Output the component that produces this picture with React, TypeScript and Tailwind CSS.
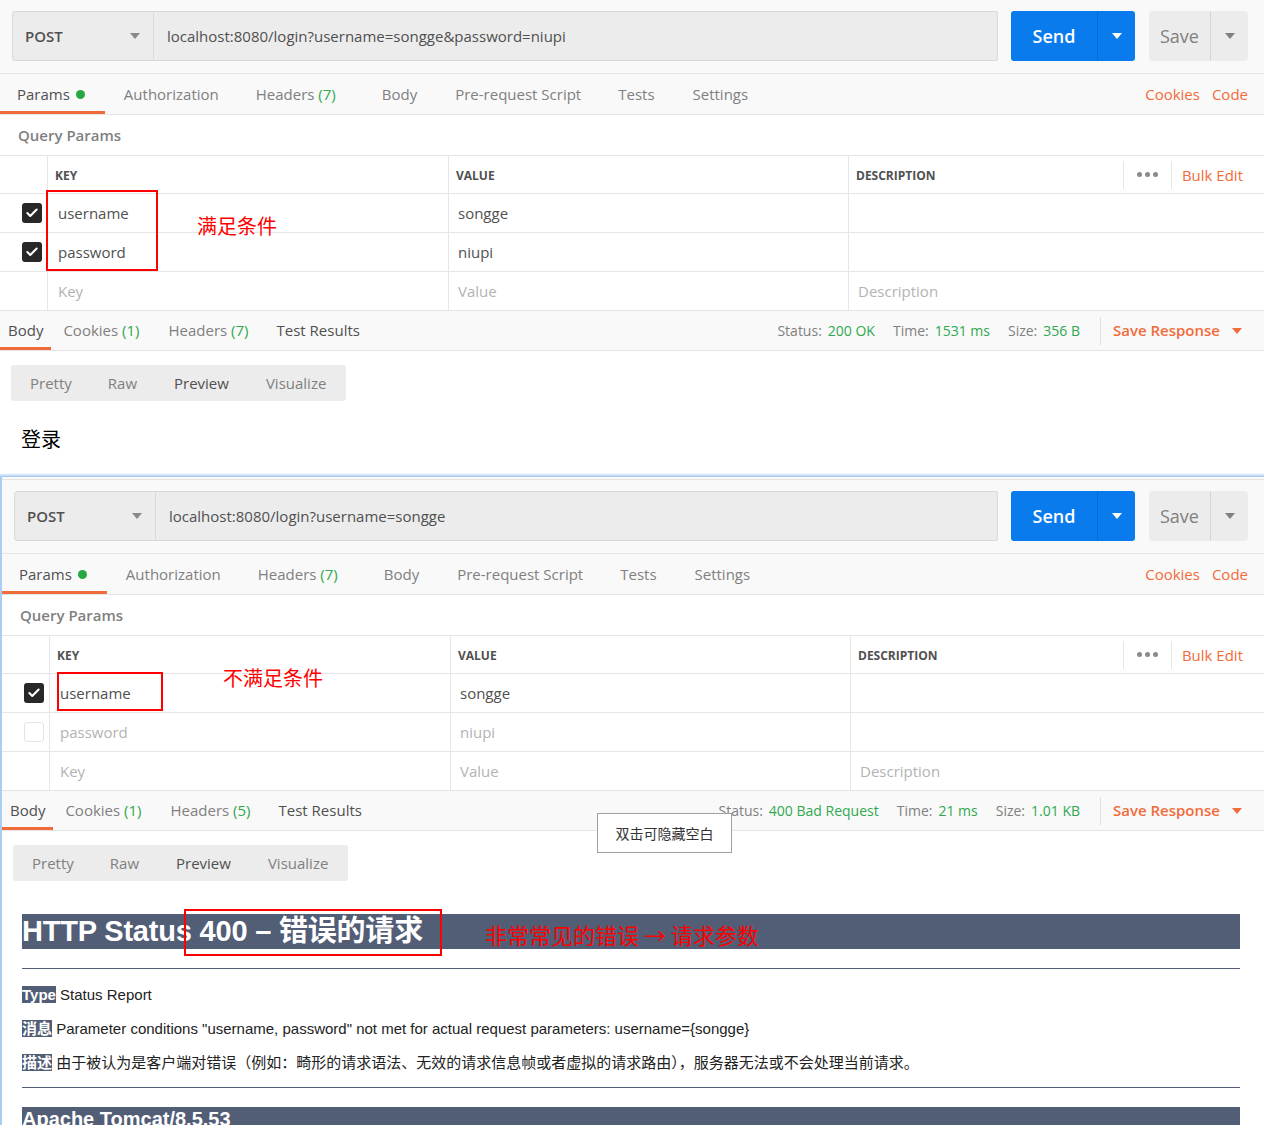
import React from 'react';
import { Check } from 'lucide-react';

const Caret = ({ className = '' }: { className?: string }) => (
  <svg width="10" height="6" viewBox="0 0 10 6" className={className}>
    <polygon points="0,0 10,0 5,6" fill="currentColor" />
  </svg>
);

type Row = { checked: boolean; key: string; value: string };

type PanelProps = {
  url: string;
  rows: Row[];
  respHeaders: number;
  status: string;
  time: string;
  size: string;
  children?: React.ReactNode;
};

function CheckBox({ checked }: { checked: boolean }) {
  if (checked) {
    return (
      <div className="w-[20px] h-[20px] rounded-[3px] bg-[#282828] flex items-center justify-center">
        <Check size={14} strokeWidth={3.5} className="text-white" />
      </div>
    );
  }
  return <div className="w-[20px] h-[20px] rounded-[3px] bg-white border border-[#e3e3e3]" />;
}

function Panel({ url, rows, respHeaders, status, time, size, children }: PanelProps) {
  return (
    <div className="bg-white">
      {/* URL bar */}
      <div className="h-[74px] bg-[#f9f9f9] border-b border-[#e4e4e4] flex pt-[11px] pl-[12px] pr-[16px]">
        <div className="flex h-[50px] flex-1">
          <div className="w-[142px] h-full bg-[#ececec] border border-[#d9d9d9] rounded-l-[3px] flex items-center justify-between pl-[12px] pr-[13px]">
            <span className="text-[15px] font-semibold text-[#505050]">POST</span>
            <Caret className="text-[#8a8a8a]" />
          </div>
          <div className="flex-1 h-full bg-[#ececec] border border-l-0 border-[#d9d9d9] rounded-r-[3px] flex items-center pl-[13px] text-[15px] text-[#505050]">
            {url}
          </div>
        </div>
        <div className="ml-[13px] flex h-[50px] w-[124px] rounded-[3px] bg-[#097bed]">
          <div className="w-[86px] flex items-center justify-center text-white text-[18px] font-semibold">Send</div>
          <div className="w-px bg-[#0a69cc]" />
          <div className="flex-1 flex items-center justify-center text-white">
            <Caret />
          </div>
        </div>
        <div className="ml-[14px] flex h-[50px] w-[99px] rounded-[3px] bg-[#ececec]">
          <div className="w-[61px] flex items-center justify-center text-[#808080] text-[18px]">Save</div>
          <div className="w-px bg-[#d6d6d6]" />
          <div className="flex-1 flex items-center justify-center text-[#808080]">
            <Caret />
          </div>
        </div>
      </div>

      {/* Request tabs */}
      <div className="h-[41px] bg-[#f9f9f9] border-b border-[#e4e4e4] flex justify-between text-[15px]">
        <div className="flex h-full">
          <div className="flex items-center pl-[17px] pr-[20px] border-b-[3px] border-[#f26b3a] pt-[3px] text-[#505050]">
            Params
            <span className="ml-[6px] w-[9px] h-[9px] rounded-full bg-[#28a745]" />
          </div>
          <div className="flex items-center pl-[19px] pr-[18px] text-[#808080]">Authorization</div>
          <div className="flex items-center px-[19px] text-[#808080]">
            Headers&nbsp;<span className="text-[#2fa84f]">(7)</span>
          </div>
          <div className="flex items-center pl-[27px] pr-[19px] text-[#808080]">Body</div>
          <div className="flex items-center pl-[19px] pr-[18px] text-[#808080]">Pre-request Script</div>
          <div className="flex items-center px-[19px] text-[#808080]">Tests</div>
          <div className="flex items-center px-[19px] text-[#808080]">Settings</div>
        </div>
        <div className="flex items-center gap-[12px] pr-[16px] text-[#f26b3a]">
          <span>Cookies</span>
          <span>Code</span>
        </div>
      </div>

      {/* Query params */}
      <div className="h-[41px] bg-white border-b border-[#e6e6e6] flex items-center pl-[18px] text-[15px] font-semibold text-[#808080]">
        Query Params
      </div>

      {/* Table */}
      <div className="grid grid-cols-[47px_401px_400px_1fr] text-[15px]">
        <div className="h-[38px] border-b border-[#e6e6e6]" />
        <div className="h-[38px] border-b border-l border-[#e6e6e6] flex items-center pl-[7px] pt-[2px] text-[12px] font-bold text-[#505050]">KEY</div>
        <div className="h-[38px] border-b border-l border-[#e6e6e6] flex items-center pl-[7px] pt-[2px] text-[12px] font-bold text-[#505050]">VALUE</div>
        <div className="h-[38px] border-b border-l border-[#e6e6e6] flex items-center pl-[7px] text-[12px] font-bold text-[#505050]">
          <span className="flex-1 pt-[2px]">DESCRIPTION</span>
          <div className="h-[28px] w-px bg-[#e6e6e6]" />
          <div className="flex items-center gap-[3px] px-[13px]">
            <span className="w-[5px] h-[5px] rounded-full bg-[#8a8a8a]" />
            <span className="w-[5px] h-[5px] rounded-full bg-[#8a8a8a]" />
            <span className="w-[5px] h-[5px] rounded-full bg-[#8a8a8a]" />
          </div>
          <div className="h-[28px] w-px bg-[#e6e6e6]" />
          <span className="pl-[10px] pr-[21px] pt-[2px] text-[15px] font-normal text-[#f26b3a]">Bulk Edit</span>
        </div>
        {rows.map((r) => (
          <React.Fragment key={r.key}>
            <div className="h-[39px] border-b border-[#e6e6e6] flex items-center pl-[22px]">
              <CheckBox checked={r.checked} />
            </div>
            <div className={`h-[39px] border-b border-l border-[#e6e6e6] flex items-center pl-[10px] ${r.checked ? 'text-[#505050]' : 'text-[#b3b3b3]'}`}>
              {r.key}
            </div>
            <div className={`h-[39px] border-b border-l border-[#e6e6e6] flex items-center pl-[9px] ${r.checked ? 'text-[#505050]' : 'text-[#b3b3b3]'}`}>
              {r.value}
            </div>
            <div className="h-[39px] border-b border-l border-[#e6e6e6]" />
          </React.Fragment>
        ))}
        <div className="h-[38px]" />
        <div className="h-[38px] border-l border-[#e6e6e6] flex items-center pl-[10px] text-[#b3b3b3]">Key</div>
        <div className="h-[38px] border-l border-[#e6e6e6] flex items-center pl-[9px] text-[#b3b3b3]">Value</div>
        <div className="h-[38px] border-l border-[#e6e6e6] flex items-center pl-[9px] text-[#b3b3b3]">Description</div>
      </div>

      {/* Response bar */}
      <div className="h-[41px] bg-[#f9f9f9] border-y border-[#e4e4e4] flex justify-between text-[15px]">
        <div className="flex h-full">
          <div className="flex items-center px-[8px] border-b-[3px] border-[#f26b3a] pt-[3px] text-[#505050]">Body</div>
          <div className="flex items-center pl-[12px] pr-[13px] text-[#808080]">
            Cookies&nbsp;<span className="text-[#2fa84f]">(1)</span>
          </div>
          <div className="flex items-center pl-[16px] pr-[15px] text-[#808080]">
            Headers&nbsp;<span className="text-[#2fa84f]">({respHeaders})</span>
          </div>
          <div className="flex items-center px-[13px] text-[#505050]">Test Results</div>
        </div>
        <div className="flex items-center pr-[22px] text-[14px]">
          <span className="text-[#808080]">Status:</span>
          <span className="ml-[6px] text-[#2fa84f]">{status}</span>
          <span className="ml-[18px] text-[#808080]">Time:</span>
          <span className="ml-[6px] text-[#2fa84f]">{time}</span>
          <span className="ml-[18px] text-[#808080]">Size:</span>
          <span className="ml-[6px] text-[#2fa84f]">{size}</span>
          <div className="ml-[20px] h-[28px] w-px bg-[#e0e0e0]" />
          <span className="ml-[12px] text-[15px] font-semibold text-[#f26b3a]">Save Response</span>
          <Caret className="ml-[12px] text-[#f26b3a]" />
        </div>
      </div>

      {/* Response body */}
      <div className="pt-[14px] pl-[11px]">
        <div className="w-[335px] h-[36px] rounded-[3px] bg-[#ececec] flex items-center text-[15px] text-[#808080]">
          <span className="ml-[19px]">Pretty</span>
          <span className="ml-[36px]">Raw</span>
          <span className="ml-[37px] text-[#505050]">Preview</span>
          <span className="ml-[37px]">Visualize</span>
        </div>
      </div>
      {children}
    </div>
  );
}

export default function App() {
  const cjk = "font-['Open_Sans','Noto_Sans_CJK_SC',sans-serif]";
  return (
    <div className={`relative w-[1264px] h-[1125px] overflow-hidden bg-white ${cjk}`}>
      <Panel
        url="localhost:8080/login?username=songge&password=niupi"
        rows={[
          { checked: true, key: 'username', value: 'songge' },
          { checked: true, key: 'password', value: 'niupi' },
        ]}
        respHeaders={7}
        status="200 OK"
        time="1531 ms"
        size="356 B"
      >
        <div className="h-[72px] pt-[24px] pl-[21px] text-[20px] text-black font-['Noto_Sans_CJK_SC',sans-serif] leading-[28px]">
          登录
        </div>
      </Panel>

      {/* divider between screenshots */}
      <div className="h-[3px] bg-gradient-to-b from-[#ffffff] to-[#b7d6f8]" />
      <div className="border-l-2 border-[#a9cdf5]">
        <div className="h-[4px] bg-[#fafafa] border-t border-b border-t-[#a6cbf3] border-b-[#e4e4e4]" />
        <Panel
          url="localhost:8080/login?username=songge"
          rows={[
            { checked: true, key: 'username', value: 'songge' },
            { checked: false, key: 'password', value: 'niupi' },
          ]}
          respHeaders={5}
          status="400 Bad Request"
          time="21 ms"
          size="1.01 KB"
        >
          <div className="pt-[33px] pl-[20px] pr-[24px] font-['Liberation_Sans','Noto_Sans_CJK_SC',sans-serif]">
            <div className="h-[35px] bg-[#525d76] text-white font-bold text-[29px] leading-[35px] tracking-[-0.2px] whitespace-nowrap">
              HTTP Status 400 – 错误的请求
            </div>
            <div className="mt-[19px] border-t border-[#525d76]" />
            <div className="mt-[16px] flex flex-col gap-[14px] text-[15px] text-[#222] leading-[20px]">
              <div>
                <span className="bg-[#525d76] text-white font-bold">Type</span> Status Report
              </div>
              <div>
                <span className="bg-[#525d76] text-white font-bold">消息</span> Parameter conditions "username, password" not met for actual request parameters: username=&#123;songge&#125;
              </div>
              <div>
                <span className="bg-[#525d76] text-white font-bold">描述</span> 由于被认为是客户端对错误（例如：畸形的请求语法、无效的请求信息帧或者虚拟的请求路由），服务器无法或不会处理当前请求。
              </div>
            </div>
            <div className="mt-[14px] border-t border-[#525d76]" />
            <div className="mt-[19px] h-[30px] bg-[#525d76] text-white font-bold text-[20px] leading-[24px]">
              Apache Tomcat/8.5.53
            </div>
          </div>
        </Panel>
      </div>

      {/* Annotations */}
      <div className="absolute left-[46px] top-[190px] w-[112px] h-[81px] border-2 border-[#ff0000]" />
      <div className="absolute left-[197px] top-[212px] text-[20px] leading-[28px] text-[#ff0000] font-['Noto_Sans_CJK_SC',sans-serif]">满足条件</div>

      <div className="absolute left-[57px] top-[672px] w-[106px] h-[39px] border-2 border-[#ff0000]" />
      <div className="absolute left-[223px] top-[664px] text-[20px] leading-[28px] text-[#ff0000] font-['Noto_Sans_CJK_SC',sans-serif]">不满足条件</div>

      <div className="absolute left-[597px] top-[813px] w-[135px] h-[40px] bg-white border border-[#a0a0a0] flex items-center justify-center text-[14px] text-[#333] font-['Noto_Sans_CJK_SC',sans-serif]">
        双击可隐藏空白
      </div>

      <div className="absolute left-[184px] top-[909px] w-[258px] h-[47px] border-2 border-[#ff0000]" />
      <div className="absolute left-[485px] top-[919px] text-[22px] leading-[30px] text-[#ff0000] font-['Noto_Sans_CJK_SC',sans-serif] whitespace-nowrap">
        非常常见的错误 → 请求参数
      </div>
    </div>
  );
}
